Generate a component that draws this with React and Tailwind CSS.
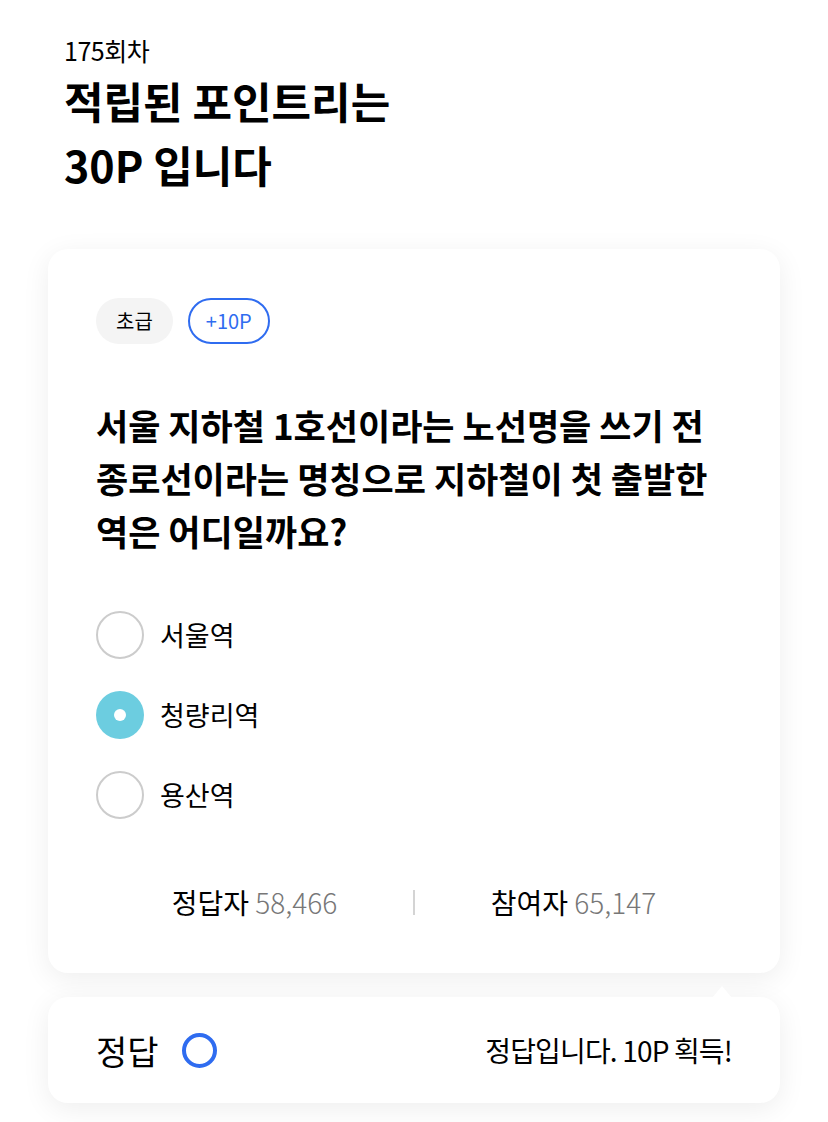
const font = { fontFamily: '"Noto Sans CJK KR", "Noto Sans", sans-serif' }

const options = [
  { label: '서울역', checked: false },
  { label: '청량리역', checked: true },
  { label: '용산역', checked: false },
]

function Radio({ checked }) {
  if (checked) {
    return (
      <span className="flex h-12 w-12 items-center justify-center rounded-full bg-[#6ccde0]">
        <span className="h-3 w-3 rounded-full bg-white" />
      </span>
    )
  }
  return <span className="h-12 w-12 rounded-full border-2 border-[#cccccc] bg-white" />
}

export default function App() {
  return (
    <div className="min-h-[1122px] w-[828px] bg-white text-black" style={font}>
      <div className="px-16 pt-[34px]">
        <p className="text-[25px] leading-[32px] tracking-[-0.02em]">175회차</p>
        <h1 className="mt-[2px] whitespace-nowrap text-[43px] font-bold leading-[64px]">
          적립된 포인트리는
          <br />
          30P 입니다
        </h1>
      </div>

      <div className="mt-[53px] px-12">
        <div className="rounded-[20px] bg-white px-12 pt-[49px] pb-[50px] shadow-[0_6px_28px_rgba(0,0,0,0.07)]">
          <div className="flex gap-[15px]">
            <span className="flex h-[46px] items-center rounded-full bg-[#f4f4f4] px-5 text-[20px]">초급</span>
            <span className="flex h-[46px] items-center rounded-full border-2 border-[#2f6cf0] px-4 text-[20px] text-[#2f6cf0]">+10P</span>
          </div>

          <p className="mt-[54px] whitespace-nowrap text-[35px] font-bold leading-[53px]">
            서울 지하철 1호선이라는 노선명을 쓰기 전
            <br />
            종로선이라는 명칭으로 지하철이 첫 출발한
            <br />
            역은 어디일까요?
          </p>

          <ul className="mt-[54px] flex flex-col gap-8">
            {options.map((o) => (
              <li key={o.label} className="flex items-center gap-4">
                <Radio checked={o.checked} />
                <span className="text-[27px]">{o.label}</span>
              </li>
            ))}
          </ul>

          <div className="mt-[62px] flex items-center text-[28px]">
            <div className="flex-1 text-center">
              정답자 <span className="font-light text-[#777777]">58,466</span>
            </div>
            <span className="h-[25px] w-[2px] bg-[#d4d4d4]" />
            <div className="flex-1 text-center">
              참여자 <span className="font-light text-[#777777]">65,147</span>
            </div>
          </div>
        </div>

        <div className="relative mt-[24px] flex h-[106px] items-center justify-between rounded-[20px] bg-white px-12 shadow-[0_6px_28px_rgba(0,0,0,0.07)]">
          <span className="absolute -top-[11px] right-[48px] h-0 w-0 border-x-[10px] border-b-[12px] border-x-transparent border-b-white" />
          <div className="flex items-center gap-[23px]">
            <span className="text-[34px]">정답</span>
            <span className="h-[35px] w-[35px] rounded-full border-[4px] border-[#2f6cf0]" />
          </div>
          <span className="text-[28px] tracking-[-0.03em]">정답입니다. 10P 획득!</span>
        </div>
      </div>
    </div>
  )
}
